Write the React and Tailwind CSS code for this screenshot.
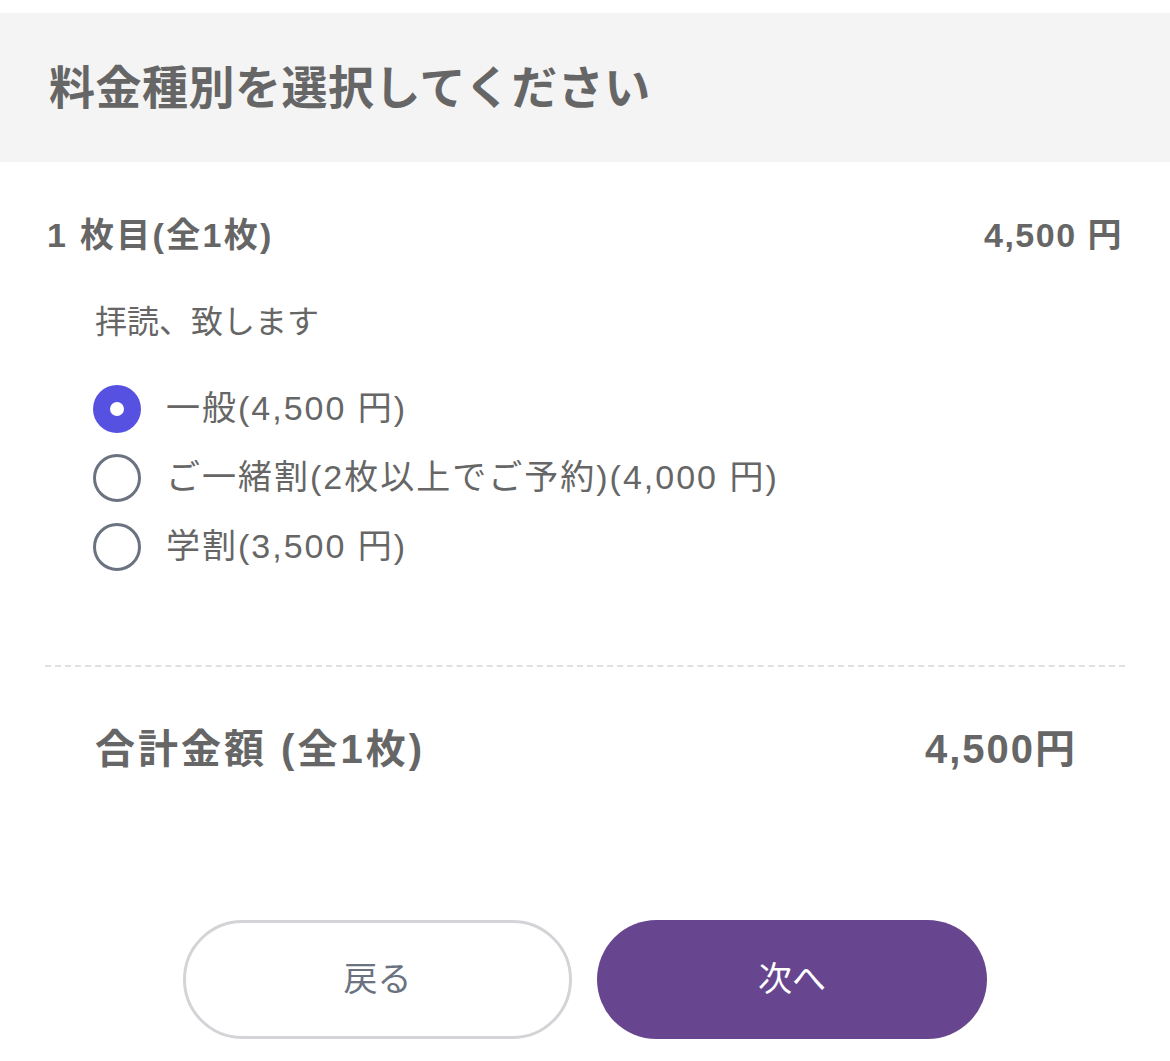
import React from "react";

const FONT = { fontFamily: '"Liberation Sans", "Noto Sans CJK JP", sans-serif' };

function Radio({ checked }) {
  if (checked) {
    return (
      <span className="flex h-[48px] w-[48px] shrink-0 items-center justify-center rounded-full bg-[#5751e1]">
        <span className="h-[14px] w-[14px] rounded-full bg-white" />
      </span>
    );
  }
  return <span className="h-[48px] w-[48px] shrink-0 rounded-full border-[3px] border-[#6b7280] bg-white" />;
}

export default function App() {
  const options = [
    { label: "一般(4,500 円)", checked: true },
    { label: "ご一緒割(2枚以上でご予約)(4,000 円)", checked: false },
    { label: "学割(3,500 円)", checked: false },
  ];
  return (
    <div className="h-[1061px] w-[1170px] bg-white pt-[13px] text-[#666666]" style={FONT}>
      <div className="flex h-[149px] items-center bg-[#f4f4f4] pl-[49px]">
        <h1 className="text-[46px] font-bold leading-none tracking-[0.5px]">料金種別を選択してください</h1>
      </div>

      <div className="mt-[43px] flex h-[60px] items-center justify-between pl-[47px] pr-[47px] text-[34px] font-bold">
        <span className="tracking-[2.3px]">1 枚目(全1枚)</span>
        <span className="tracking-[1.5px]">4,500 円</span>
      </div>

      <div className="mt-[35px] flex h-[44px] items-center pl-[95px] text-[32px]">拝読、致します</div>

      <div className="mt-[30px] flex flex-col pl-[93px]">
        {options.map((o) => (
          <label key={o.label} className="flex h-[69px] items-center gap-[25px] text-[34px]">
            <Radio checked={o.checked} />
            <span className="tracking-[2px]">{o.label}</span>
          </label>
        ))}
      </div>

      <div className="mx-[45px] mt-[84px] border-t-2 border-dashed border-[#e0e0e0]" />

      <div className="mt-[52px] flex h-[60px] items-center justify-between pl-[95px] pr-[93px] text-[40px] font-bold">
        <span className="tracking-[3px]">合計金額 (全1枚)</span>
        <span className="tracking-[2px]">4,500円</span>
      </div>

      <div className="mt-[141px] flex justify-center gap-[25px]">
        <button className="flex h-[119px] w-[389px] items-center justify-center rounded-full border-[3px] border-[#d4d4d8] bg-white text-[34px] text-[#6b7280]">
          戻る
        </button>
        <button className="flex h-[119px] w-[390px] items-center justify-center rounded-full bg-[#68468f] text-[34px] text-white">
          次へ
        </button>
      </div>
    </div>
  );
}
